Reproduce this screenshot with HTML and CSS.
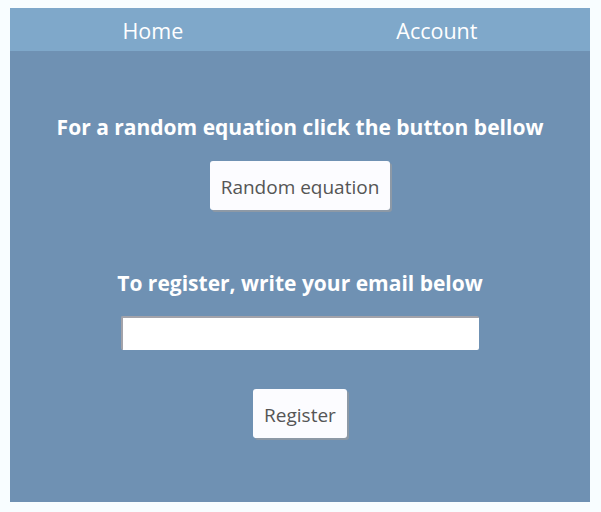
FILE: index.html
```html
<!DOCTYPE html>
<html>
<head>
<meta charset="utf-8">
<link rel="stylesheet" href="styles.css">
</head>
<body>
<div class="app">
  <nav class="nav">
    <a class="nav-link" href="#">Home</a>
    <a class="nav-link" href="#">Account</a>
  </nav>
  <main class="main">
    <h2 class="title">For a random equation click the button bellow</h2>
    <button class="btn btn-random">Random equation</button>
    <h2 class="title title-register">To register, write your email below</h2>
    <input class="email" type="text">
    <button class="btn btn-register">Register</button>
  </main>
</div>
</body>
</html>
```
FILE: styles.css
```css
html, body {
  margin: 0;
  padding: 0;
  background: #f8fdff;
}
body {
  padding: 8px 11px 10px 10px;
  font-family: "Open Sans", "Noto Sans", sans-serif;
}
.app {
  width: 580px;
  background: #6f91b3;
}
.nav {
  height: 43px;
  padding: 0 6px;
  background: #7fa8ca;
  display: flex;
  justify-content: space-around;
  align-items: center;
}
.nav-link {
  color: #ffffff;
  text-decoration: none;
  font-size: 21.5px;
  line-height: 28px;
  padding-top: 2px;
}
.main {
  display: flex;
  flex-direction: column;
  align-items: center;
  padding: 62px 0 64px;
}
.title {
  margin: 0;
  color: #ffffff;
  font-size: 21px;
  line-height: 28px;
  font-weight: 700;
}
.btn {
  margin-top: 20px;
  border: none;
  border-radius: 3px;
  background: #fcfcff;
  color: #555555;
  font-family: inherit;
  font-size: 19px;
  line-height: 25px;
  padding: 14px 11px 10px;
  box-shadow: 2px 2px 0 #8d99a6;
}
.title-register {
  margin-top: 59px;
}
.email {
  margin-top: 19px;
  width: 358px;
  height: 34px;
  box-sizing: border-box;
  border: none;
  border-top: 2px solid #a3a3aa;
  border-left: 2px solid #a3a3aa;
  border-radius: 2px;
  background: #ffffff;
}
.btn-register {
  margin-top: 39px;
}
```
